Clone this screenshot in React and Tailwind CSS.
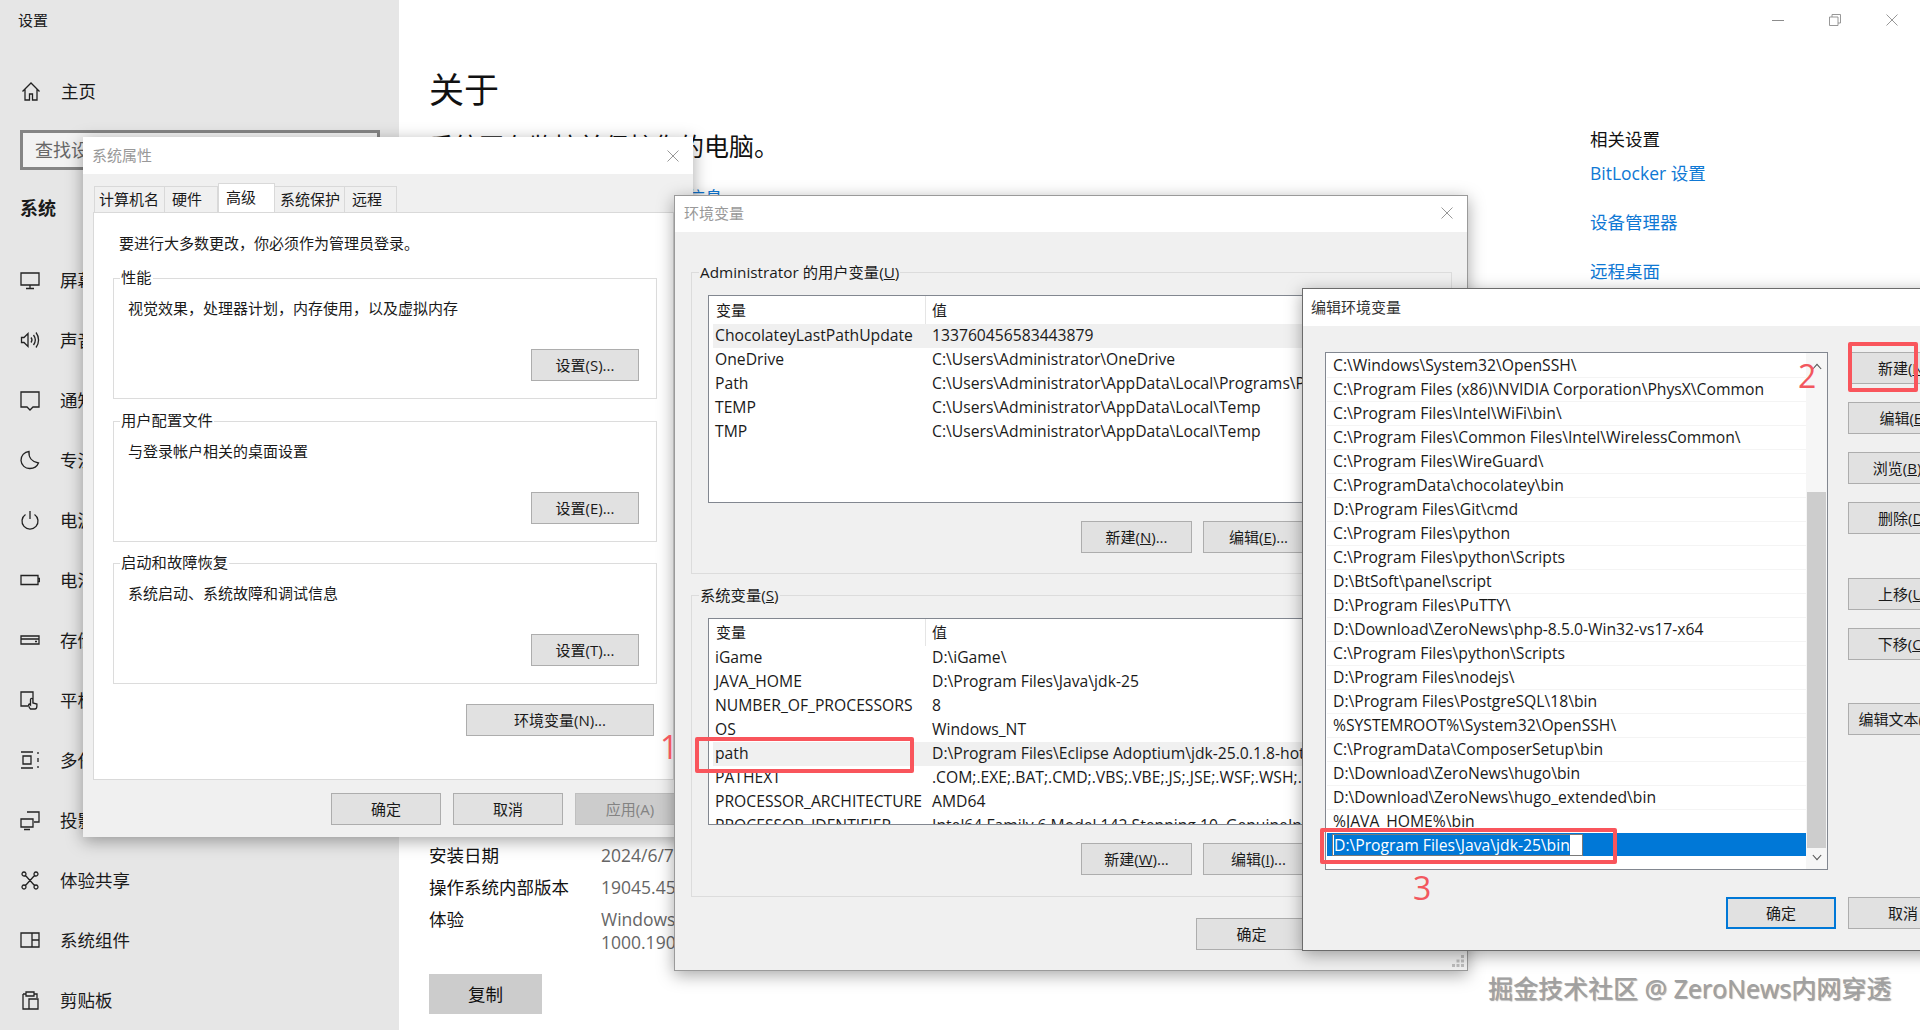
const NAV = [
  ['display', '屏幕'],
  ['sound', '声音'],
  ['notify', '通知和操作'],
  ['moon', '专注助手'],
  ['power', '电源和睡眠'],
  ['battery', '电池'],
  ['storage', '存储'],
  ['tablet', '平板电脑'],
  ['multi', '多任务处理'],
  ['project', '投影到此电脑'],
  ['share', '体验共享'],
  ['parts', '系统组件'],
  ['clip', '剪贴板'],
]

const ICONS = {
  home: 'M1.5 10.5 10 2l8.5 8.5M4 8.5V19h4.5v-6h3v6H16V8.5',
  display: 'M1 3h18v12H1zM10 15v3M6 18.5h8',
  sound: 'M1.5 7.5v5H4l4 4v-13l-4 4zM11 7.5c1.2 1.5 1.2 3.5 0 5M13.5 5c2.2 3 2.2 7 0 10M16 2.5c3.4 4.5 3.4 10.500 0 15',
  notify: 'M1 2h18v15h-6l-3 3-3-3H1z',
  moon: 'M9 1.500c-.5 6 3 10.500 9.500 11.500-1.500 3.500-5 5.500-8.500 5.500a8.500 8.500 0 0 1-1-17z',
  power: 'M10 1v8M5.500 4.500a8 8 0 1 0 9 0',
  battery: 'M1 5.500h17v9H1zM18 8.500h1.500v3H18',
  storage: 'M1 6h18v8H1zM1 9h18M15 11.500h2',
  tablet: 'M13 13V2H1v14h7M10.500 19c-2-2-2.500-5-1-5l1 1V9.500a1.200 1.200 0 0 1 2.400 0V13l4 1v2c0 2-1 3-2 3z',
  multi: 'M1 2h12M1 18h12M3 6h8v8H3zM18 2v2M18 8v4M18 16v2',
  project: 'M7 2h12v10h-5M1 9h12v8H1zM4 19.500h6',
  share: 'M5.500 5.500l9 10M14.500 5.500l-9 10M4 2a2 2 0 1 1-.010 0M16 2a2 2 0 1 1-.010 0M4 15a2 2 0 1 1-.010 0M16 15a2 2 0 1 1-.010 0',
  parts: 'M1 3h18v14H1zM12 3v14M12 10h7',
  clip: 'M3 4h3M14 4h3v4M3 4v15h6M6 2h8v4H6zM9 9h9v10H9z',
}

const USER_VARS = [
  ['ChocolateyLastPathUpdate', '133760456583443879'],
  ['OneDrive', 'C:\\Users\\Administrator\\OneDrive'],
  ['Path', 'C:\\Users\\Administrator\\AppData\\Local\\Programs\\Python\\Python313'],
  ['TEMP', 'C:\\Users\\Administrator\\AppData\\Local\\Temp'],
  ['TMP', 'C:\\Users\\Administrator\\AppData\\Local\\Temp'],
]

const SYSTEM_VARS = [
  ['iGame', 'D:\\iGame\\'],
  ['JAVA_HOME', 'D:\\Program Files\\Java\\jdk-25'],
  ['NUMBER_OF_PROCESSORS', '8'],
  ['OS', 'Windows_NT'],
  ['path', 'D:\\Program Files\\Eclipse Adoptium\\jdk-25.0.1.8-hotspot\\bin'],
  ['PATHEXT', '.COM;.EXE;.BAT;.CMD;.VBS;.VBE;.JS;.JSE;.WSF;.WSH;.MSC'],
  ['PROCESSOR_ARCHITECTURE', 'AMD64'],
  ['PROCESSOR_IDENTIFIER', 'Intel64 Family 6 Model 142 Stepping 10, GenuineIntel'],
]

const PATHS = [
  'C:\\Windows\\System32\\OpenSSH\\',
  'C:\\Program Files (x86)\\NVIDIA Corporation\\PhysX\\Common',
  'C:\\Program Files\\Intel\\WiFi\\bin\\',
  'C:\\Program Files\\Common Files\\Intel\\WirelessCommon\\',
  'C:\\Program Files\\WireGuard\\',
  'C:\\ProgramData\\chocolatey\\bin',
  'D:\\Program Files\\Git\\cmd',
  'C:\\Program Files\\python',
  'C:\\Program Files\\python\\Scripts',
  'D:\\BtSoft\\panel\\script',
  'D:\\Program Files\\PuTTY\\',
  'D:\\Download\\ZeroNews\\php-8.5.0-Win32-vs17-x64',
  'C:\\Program Files\\python\\Scripts',
  'D:\\Program Files\\nodejs\\',
  'D:\\Program Files\\PostgreSQL\\18\\bin',
  '%SYSTEMROOT%\\System32\\OpenSSH\\',
  'C:\\ProgramData\\ComposerSetup\\bin',
  'D:\\Download\\ZeroNews\\hugo\\bin',
  'D:\\Download\\ZeroNews\\hugo_extended\\bin',
  '%JAVA_HOME%\\bin',
]

function NavIcon({ name }) {
  return (
    <svg viewBox="0 0 20 21" className="w-[20px] h-[21px] shrink-0" fill="none" stroke="#222" strokeWidth="1.3">
      <path d={ICONS[name]} />
    </svg>
  )
}

function CloseIcon({ color = '#8c8c8c' }) {
  return (
    <svg viewBox="0 0 12 12" className="w-[12px] h-[12px]" fill="none" stroke={color} strokeWidth="0.9">
      <path d="M0.5 0.5l11 11M11.500 0.5l-11 11" />
    </svg>
  )
}

const BTN_VARIANTS = {
  normal: 'border border-[#adadad] bg-[#e1e1e1] text-[#1a1a1a]',
  primary: 'border-2 border-[#0078d7] bg-[#e1e1e1] text-[#1a1a1a]',
  disabled: 'border border-[#bfbfbf] bg-[#cccccc] text-[#838383]',
}

function Btn({ children, className = '', variant = 'normal' }) {
  return (
    <div className={`h-[32px] shrink-0 flex items-center justify-center text-[15px] whitespace-nowrap ${BTN_VARIANTS[variant]} ${className}`}>
      {children}
    </div>
  )
}

function GroupBox({ label, className = '', labelPos = 'left-[6px] -top-[12px]', children }) {
  return (
    <div className={`relative border border-[#dcdcdc] ${className}`}>
      <span className={`absolute bg-inherit px-[1px] text-[15.300px] leading-[20px] whitespace-nowrap ${labelPos}`}>{label}</span>
      {children}
    </div>
  )
}

function SettingsGroup({ label, desc, button }) {
  return (
    <GroupBox label={label} className="h-[121px] w-[544px] ml-[19px] bg-white pt-[19px] pl-[14px] pr-[17px]">
      <div className="h-[20px] text-[15px] leading-[20px]">{desc}</div>
      <Btn className="w-[108px] mt-[31px] ml-auto">{button}</Btn>
    </GroupBox>
  )
}

function VarList({ rows, hover, height, headerHeight }) {
  return (
    <div className={`w-[732px] border border-[#828790] bg-white overflow-hidden ${height}`}>
      <div className={`flex items-center text-[15px] ${headerHeight}`}>
        <div className="w-[217px] h-full pl-[7px] flex items-center border-r border-[#e5e5e5]">变量</div>
        <div className="pl-[6px]">值</div>
      </div>
      {rows.map(([name, value], i) => (
        <div key={name} className={`flex h-[24px] items-center ml-[4px] text-[15.700px] whitespace-nowrap ${i === hover ? 'bg-[#f0f0f0]' : ''}`}>
          <div className="w-[219px] shrink-0 pl-[2px]">{name}</div>
          <div>{value}</div>
        </div>
      ))}
    </div>
  )
}

function Tabs() {
  return (
    <div className="flex h-[26px] items-end pl-[1px] text-[15px]">
      <div className="w-[71px] h-[26px] border border-b-0 border-[#d9d9d9] pl-[4px] leading-[24px]">计算机名</div>
      <div className="w-[53px] h-[26px] border-t border-r border-[#d9d9d9] pl-[7px] leading-[24px]">硬件</div>
      <div className="w-[57px] h-[29px] border border-b-0 border-[#d9d9d9] bg-white pl-[7px] leading-[26px]">高级</div>
      <div className="w-[70px] h-[26px] border-t border-r border-[#d9d9d9] pl-[5px] leading-[24px]">系统保护</div>
      <div className="w-[52px] h-[26px] border-t border-r border-[#d9d9d9] pl-[7px] leading-[24px]">远程</div>
    </div>
  )
}

function SystemProps() {
  return (
    <div className="absolute left-[83px] top-[137px] w-[610px] h-[700px] bg-[#f0f0f0] shadow-[0_4px_16px_rgba(0,0,0,0.35)] flex flex-col">
      <div className="h-[37px] bg-white flex items-center justify-between pl-[9px] pr-[14px] text-[15px] text-[#999]">
        系统属性
        <CloseIcon />
      </div>
      <div className="pl-[10px] pt-[12px]">
        <Tabs />
        <div className="h-[568px] w-[581px] bg-white border border-[#d9d9d9]">
          <div className="pl-[25px] pt-[20px] h-[65px] text-[15px] leading-[20px]">要进行大多数更改，你必须作为管理员登录。</div>
          <SettingsGroup label="性能" desc="视觉效果，处理器计划，内存使用，以及虚拟内存" button="设置(S)..." />
          <div className="h-[22px]" />
          <SettingsGroup label="用户配置文件" desc="与登录帐户相关的桌面设置" button="设置(E)..." />
          <div className="h-[21px]" />
          <SettingsGroup label="启动和故障恢复" desc="系统启动、系统故障和调试信息" button="设置(T)..." />
          <Btn className="w-[188px] mt-[20px] ml-[372px]">环境变量(N)...</Btn>
        </div>
        <div className="flex gap-[12px] mt-[13px] ml-[238px]">
          <Btn className="w-[110px]">确定</Btn>
          <Btn className="w-[110px]">取消</Btn>
          <Btn className="w-[110px]" variant="disabled">应用(A)</Btn>
        </div>
      </div>
    </div>
  )
}

function EnvVars() {
  return (
    <div className="absolute left-[674px] top-[195px] w-[794px] h-[776px] bg-[#f0f0f0] border border-[#9a9a9a] shadow-[0_4px_16px_rgba(0,0,0,0.35)]">
      <div className="h-[36px] bg-white flex items-center justify-between pl-[9px] pr-[14px] pb-[2px] text-[15px] text-[#999]">
        环境变量
        <CloseIcon />
      </div>
      <div className="pl-[16px] pt-[40px] bg-[#f0f0f0]">
        <GroupBox
          label={<>Administrator 的用户变量(<u>U</u>)</>}
          labelPos="left-[7px] -top-[11px]"
          className="w-[761px] h-[302px] pt-[22px] pl-[16px] bg-[#f0f0f0]"
        >
          <VarList rows={USER_VARS} hover={0} height="h-[208px]" headerHeight="h-[28px]" />
          <div className="flex gap-[11px] mt-[18px] ml-[373px]">
            <Btn className="w-[111px]">新建(<u>N</u>)...</Btn>
            <Btn className="w-[111px]">编辑(<u>E</u>)...</Btn>
            <Btn className="w-[111px]">删除(<u>D</u>)</Btn>
          </div>
        </GroupBox>
        <div className="h-[21px]" />
        <GroupBox
          label={<>系统变量(<u>S</u>)</>}
          labelPos="left-[7px] -top-[11px]"
          className="w-[761px] h-[302px] pt-[22px] pl-[16px] bg-[#f0f0f0]"
        >
          <VarList rows={SYSTEM_VARS} hover={4} height="h-[207px]" headerHeight="h-[27px]" />
          <div className="flex gap-[11px] mt-[18px] ml-[373px]">
            <Btn className="w-[111px]">新建(<u>W</u>)...</Btn>
            <Btn className="w-[111px]">编辑(<u>I</u>)...</Btn>
            <Btn className="w-[111px]">删除(<u>L</u>)</Btn>
          </div>
        </GroupBox>
        <div className="flex gap-[11px] mt-[21px] ml-[505px]">
          <Btn className="w-[111px]">确定</Btn>
          <Btn className="w-[111px]">取消</Btn>
        </div>
      </div>
      <svg viewBox="0 0 12 12" className="absolute right-[3px] bottom-[3px] w-[12px] h-[12px]" fill="#bdbdbd">
        <path d="M9 0h3v3H9zM4.500 4.500h3v3h-3zM9 4.500h3v3H9zM0 9h3v3H0zM4.500 9h3v3h-3zM9 9h3v3H9z" />
      </svg>
    </div>
  )
}

function PathList() {
  return (
    <div className="w-[503px] h-[518px] shrink-0 border border-[#828790] bg-white flex overflow-hidden">
      <div className="w-[480px] pt-[1px] pl-[1px]">
        {PATHS.map((p, i) => (
          <div key={i} className="h-[24px] flex items-center pl-[6px] border-b border-[#f4f4f4] text-[15.700px] whitespace-nowrap">{p}</div>
        ))}
        <div className="h-[23px] -mt-[1px] bg-[#0078d7] flex items-center pl-[5px]">
          <div className="h-[22px] w-[251px] bg-white border border-[#7a7a7a] pl-[1px] flex items-center">
            <span className="bg-[#0078d7] text-white text-[15.700px] leading-[20px] whitespace-nowrap">D:\Program Files\Java\jdk-25\bin</span>
          </div>
        </div>
      </div>
      <div className="w-[21px] bg-[#f6f6f6] flex flex-col items-center">
        <svg viewBox="0 0 12 8" className="w-[10px] h-[7px] mt-[10px] shrink-0" fill="none" stroke="#555" strokeWidth="1.300"><path d="M1 7l5-5.500L11 7" /></svg>
        <div className="w-[19px] h-[356px] bg-[#cdcdcd] mt-[122px] shrink-0" />
        <svg viewBox="0 0 12 8" className="w-[10px] h-[7px] mt-[6px] shrink-0" fill="none" stroke="#555" strokeWidth="1.300"><path d="M1 1l5 5.500L11 1" /></svg>
      </div>
    </div>
  )
}

function EditVar() {
  return (
    <div className="absolute left-[1302px] top-[288px] w-[640px] h-[663px] bg-[#f0f0f0] border border-[#6b6b6b] shadow-[0_4px_16px_rgba(0,0,0,0.35)]">
      <div className="h-[37px] bg-white flex items-center pl-[8px] text-[15px] text-[#333]">编辑环境变量</div>
      <div className="flex gap-[20px] pl-[22px] pt-[26px]">
        <PathList />
        <div className="flex flex-col">
          <Btn className="w-[110px]">新建(<u>N</u>)</Btn>
          <Btn className="w-[110px] mt-[18px]">编辑(<u>E</u>)</Btn>
          <Btn className="w-[110px] mt-[18px]">浏览(<u>B</u>)...</Btn>
          <Btn className="w-[110px] mt-[18px]">删除(<u>D</u>)</Btn>
          <Btn className="w-[110px] mt-[44px]">上移(<u>U</u>)</Btn>
          <Btn className="w-[110px] mt-[18px]">下移(<u>O</u>)</Btn>
          <Btn className="w-[110px] mt-[43px]">编辑文本(<u>T</u>)...</Btn>
        </div>
      </div>
      <div className="flex gap-[12px] ml-[423px] mt-[27px]">
        <Btn className="w-[110px]" variant="primary">确定</Btn>
        <Btn className="w-[110px]">取消</Btn>
      </div>
    </div>
  )
}

function Sidebar() {
  return (
    <aside className="w-[399px] h-full shrink-0 bg-[#e6e6e6] text-[#1a1a1a]">
      <div className="h-[40px] pl-[18px] flex items-center text-[15px]">设置</div>
      <div className="h-[32px] mt-[35px] pl-[21px] flex items-center gap-[20px] text-[17.500px]">
        <NavIcon name="home" />
        主页
      </div>
      <div className="h-[40px] w-[360px] ml-[20px] mt-[23px] border-[3px] border-[#858585] bg-[#f2f2f2] pl-[12px] flex items-center text-[18px] text-[#666]">查找设置</div>
      <div className="h-[26px] mt-[25px] pl-[20px] flex items-center text-[18px] font-bold">系统</div>
      <div className="mt-[44px] flex flex-col gap-[30px]">
        {NAV.map(([icon, label]) => (
          <div key={icon} className="h-[30px] pl-[20px] flex items-center gap-[20px] text-[17.500px]">
            <NavIcon name={icon} />
            {label}
          </div>
        ))}
      </div>
    </aside>
  )
}

function Content() {
  return (
    <main className="flex-1 h-full bg-white flex flex-col text-[#111]">
      <div className="h-[40px] flex items-center justify-end gap-[45px] pr-[22px] text-[#8c8c8c]">
        <div className="w-[12px] h-[1px] bg-[#8c8c8c]" />
        <svg viewBox="0 0 12 12" className="w-[12px] h-[12px]" fill="none" stroke="#8c8c8c" strokeWidth="0.9">
          <path d="M0.500 3h8.500v8.500H0.500zM3 3V0.500h8.500V9H9" />
        </svg>
        <CloseIcon />
      </div>
      <div className="flex">
        <div className="w-[1191px] shrink-0 pl-[30px]">
          <h1 className="text-[35px] leading-[50px] mt-[25px]">关于</h1>
          <p className="text-[25px] leading-[32px] mt-[15px] whitespace-nowrap">系统正在监控并保护你的电脑。</p>
          <p className="text-[17.500px] leading-[24px] mt-[23px] text-[#0f78d4] whitespace-nowrap">在 Windows 安全中心中查看详细信息</p>
          <div className="h-[630px]" />
          <div className="grid grid-cols-[172px_1fr] text-[17.500px] leading-[32px]">
            <span>安装日期</span>
            <span className="text-[#666]">2024/6/7</span>
            <span>操作系统内部版本</span>
            <span className="text-[#666]">19045.4529</span>
            <span>体验</span>
            <span className="text-[#666] leading-[23px] pt-[5px] whitespace-nowrap">
              Windows Feature Experience Pack
              <br />
              1000.19053.1000.0
            </span>
          </div>
          <div className="w-[113px] h-[40px] bg-[#cccccc] flex items-center justify-center text-[17.500px] mt-[20px]">复制</div>
        </div>
        <div className="flex flex-col">
          <div className="text-[17.500px] leading-[24px] mt-[87px]">相关设置</div>
          <div className="text-[17.500px] leading-[24px] text-[#0f78d4] mt-[10px]">BitLocker 设置</div>
          <div className="text-[17.500px] leading-[24px] text-[#0f78d4] mt-[25px]">设备管理器</div>
          <div className="text-[17.500px] leading-[24px] text-[#0f78d4] mt-[25px]">远程桌面</div>
        </div>
      </div>
    </main>
  )
}

export default function App() {
  return (
    <div className="relative w-[1920px] h-[1030px] overflow-hidden flex bg-white text-[#1a1a1a] font-['Open_Sans','Noto_Sans_CJK_SC',sans-serif]">
      <Sidebar />
      <Content />
      <SystemProps />
      <EnvVars />
      <EditVar />

      {/* 标注 */}
      <div className="absolute left-[695px] top-[737px] w-[219px] h-[36px] border-[4px] border-[#f9555c] rounded-[2px]" />
      <div className="absolute left-[1848px] top-[342px] w-[70px] h-[50px] border-[4px] border-[#f9555c] rounded-[2px]" />
      <div className="absolute left-[1320px] top-[828px] w-[297px] h-[36px] border-[4px] border-[#f9555c] rounded-[2px]" />
      <span className="absolute left-[660px] top-[727px] text-[32px] leading-[40px] text-[#f2575e]">1</span>
      <span className="absolute left-[1798px] top-[356px] text-[32px] leading-[40px] text-[#f2575e]">2</span>
      <span className="absolute left-[1413px] top-[868px] text-[32px] leading-[40px] text-[#f2575e]">3</span>
      <span className="absolute left-[1488px] top-[973px] text-[25px] leading-[30px] text-[#a0a0a0] whitespace-nowrap [text-shadow:1px_1px_1px_rgba(90,90,90,0.6)]">
        掘金技术社区 @ ZeroNews内网穿透
      </span>
    </div>
  )
}
